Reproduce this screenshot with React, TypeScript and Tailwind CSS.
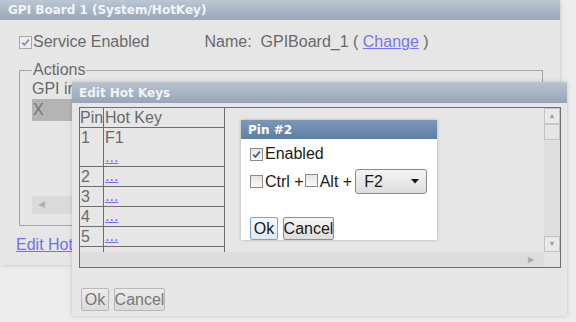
import React from "react";

const body = { fontFamily: '"Liberation Sans", Arial, sans-serif' };
const head = { fontFamily: '"DejaVu Sans", Verdana, sans-serif' };

function Box({ checked, faded }: { checked?: boolean; faded?: boolean }) {
  return (
    <span
      className={`inline-flex h-[13px] w-[13px] shrink-0 items-center justify-center border ${
        faded ? "border-[#a8a8a8] bg-[#ececec]" : "border-[#8a8a8a] bg-gradient-to-b from-[#e4e4e4] to-[#fafafa]"
      }`}
    >
      {checked && (
        <svg width="9" height="9" viewBox="0 0 9 9">
          <path
            d="M1.2 4.6 L3.4 7 L7.8 1.6"
            fill="none"
            stroke={faded ? "#8090b0" : "#3d5a95"}
            strokeWidth="1.7"
          />
        </svg>
      )}
    </span>
  );
}

function Btn({ children, w, faded, focus }: { children: React.ReactNode; w: string; faded?: boolean; focus?: boolean }) {
  return (
    <div
      className={`flex h-[23px] ${w} items-center justify-center rounded-[2px] border text-[16px] ${
        faded
          ? "border-[#b8b8b8] bg-gradient-to-b from-[#ececec] to-[#dadada] text-[#777]"
          : focus
          ? "border-[#7da2ce] bg-gradient-to-b from-[#f4f8fc] to-[#dfe9f4] text-[#1a1a1a]"
          : "border-[#8e8e8e] bg-gradient-to-b from-[#f6f6f6] to-[#dcdcdc] text-[#1a1a1a]"
      }`}
    >
      {children}
    </div>
  );
}

const rows = [
  { n: "1", k: "F1", tall: true },
  { n: "2", k: "" },
  { n: "3", k: "" },
  { n: "4", k: "" },
  { n: "5", k: "" },
];

export default function App() {
  return (
    <div className="relative h-[322px] w-[576px] overflow-hidden bg-[#ececec]" style={body}>
      {/* Main panel */}
      <div className="flex h-[265px] w-[560px] flex-col bg-[#e6e6e6] shadow-[1px_1px_3px_rgba(0,0,0,0.12)]">
        <div
          className="flex h-[20px] items-center bg-gradient-to-b from-[#bcc6d3] to-[#97a6b9] pl-[8px] text-[12px] font-bold text-[#f2f4f7]"
          style={head}
        >
          GPI Board 1 (System/HotKey)
        </div>
        <div className="flex flex-col px-[19px] pt-[13px] text-[16px] text-[#666]">
          <div className="flex h-[18px] items-center">
            <Box checked faded />
            <span className="ml-[1px] text-[#6a6a6a]">Service Enabled</span>
            <span className="ml-[55px] text-[#6a6a6a]">Name:&nbsp; GPIBoard_1 ( <span className="text-[#7676ee] underline">Change</span> )</span>
          </div>
          <fieldset className="mt-[11px] h-[164px] w-[524px] border border-[#a3a3a3] px-[12px] pb-0 pt-0">
            <legend className="px-[1px] text-[#6a6a6a] leading-[16px]">Actions</legend>
            <div className="mt-[2px] leading-[18px] text-[#6a6a6a]">GPI in</div>
            <div className="mt-[1px] flex h-[22px] w-[60px] items-center bg-[#b4b4b4] pl-[1px] text-[#777]">X</div>
            <div className="mt-[75px] flex h-[18px] w-[60px] items-center bg-[#dadada] pl-[6px]">
              <span className="text-[9px] text-[#b0b0b0]">◀</span>
            </div>
          </fieldset>
          <div className="ml-[-3px] mt-[7px] w-[56px] overflow-hidden whitespace-nowrap text-[#7070f0] underline">Edit Hot</div>
        </div>
      </div>

      {/* Edit Hot Keys dialog */}
      <div className="absolute left-[72px] top-[82px] flex h-[234px] w-[495px] flex-col bg-[#e6e6e6] shadow-[0_0_4px_rgba(0,0,0,0.18)]">
        <div
          className="flex h-[21px] items-center bg-gradient-to-b from-[#b9c3d0] to-[#96a5b9] pl-[7px] text-[12px] font-bold text-[#f2f4f7]"
          style={head}
        >
          Edit Hot Keys
        </div>
        <div className="ml-[7px] mt-[4px] grid h-[161px] w-[482px] grid-cols-[1fr_16px] grid-rows-[1fr_15px] border border-[#6e6e6e]">
          <div className="overflow-hidden">
            <div className="h-full w-[145px] border-r border-[#6e6e6e] text-[16px] text-[#6a6a6a]">
              <div className="flex h-[20px] border-b border-[#6e6e6e] leading-[19px]">
                <div className="w-[24px] border-r border-[#6e6e6e]">Pin</div>
                <div className="pl-[1px]">Hot Key</div>
              </div>
              {rows.map((r) => (
                <div key={r.n} className={`flex ${r.tall ? "h-[39px]" : "h-[20px]"} border-b border-[#6e6e6e]`}>
                  <div className="w-[24px] border-r border-[#6e6e6e] pl-[1px] leading-[19px]">{r.n}</div>
                  <div className="flex flex-col pl-[1px]">
                    {r.k && <span className="leading-[19px]">{r.k}</span>}
                    <span className={`text-[16px] leading-[18px] text-[#7070f0] underline ${r.k ? "mt-[1px]" : ""}`}>...</span>
                  </div>
                </div>
              ))}
              <div className="flex h-[20px]">
                <div className="w-[24px] border-r border-[#6e6e6e]"></div>
              </div>
            </div>
          </div>
          <div className="flex flex-col bg-[#dedede]">
            <div className="flex h-[16px] items-center justify-center border border-[#c4c4c4] bg-[#e8e8e8] text-[7px] text-[#999]">▲</div>
            <div className="h-[16px] border border-[#c4c4c4] bg-[#e4e4e4]"></div>
            <div className="flex-1"></div>
            <div className="flex h-[16px] items-center justify-center border border-[#c4c4c4] bg-[#e8e8e8] text-[7px] text-[#999]">▼</div>
          </div>
          <div className="flex items-center justify-end bg-[#dcdcdc] pr-[10px] text-[8px] text-[#aaa]">▶</div>
          <div className="bg-[#e4e4e4]"></div>
        </div>
        <div className="ml-[9px] mt-[20px] flex gap-[5px]">
          <Btn w="w-[28px]" faded>Ok</Btn>
          <Btn w="w-[51px]" faded>Cancel</Btn>
        </div>
      </div>

      {/* Pin #2 dialog */}
      <div className="absolute left-[241px] top-[120px] flex h-[120px] w-[196px] flex-col bg-white shadow-[0_0_3px_rgba(0,0,0,0.25)]">
        <div
          className="flex h-[21px] items-center bg-gradient-to-b from-[#7d97b8] to-[#5f7ea6] pl-[7px] text-[12px] font-bold text-white"
          style={head}
        >
          Pin #2
        </div>
        <div className="flex flex-col px-[9px] text-[16px] text-[#1a1a1a]">
          <div className="mt-[5px] flex h-[20px] items-center">
            <Box checked />
            <span className="ml-[2px]">Enabled</span>
          </div>
          <div className="mt-[5px] flex h-[25px] items-center">
            <Box />
            <span className="ml-[2px]">Ctrl +</span>
            <span className="ml-[1px]"><Box /></span>
            <span className="ml-[2px]">Alt +</span>
            <div className="ml-[3px] flex h-[25px] w-[72px] items-center justify-between rounded-[3px] border border-[#8a8a8a] bg-gradient-to-b from-[#f4f4f4] to-[#dddddd] pl-[8px] pr-[7px]">
              <span>F2</span>
              <svg width="8" height="5" viewBox="0 0 8 5">
                <path d="M0 0 H8 L4 4.5 Z" fill="#111" />
              </svg>
            </div>
          </div>
          <div className="mt-[23px] flex gap-[5px]">
            <Btn w="w-[28px]" focus>Ok</Btn>
            <Btn w="w-[51px]">Cancel</Btn>
          </div>
        </div>
      </div>
    </div>
  );
}
